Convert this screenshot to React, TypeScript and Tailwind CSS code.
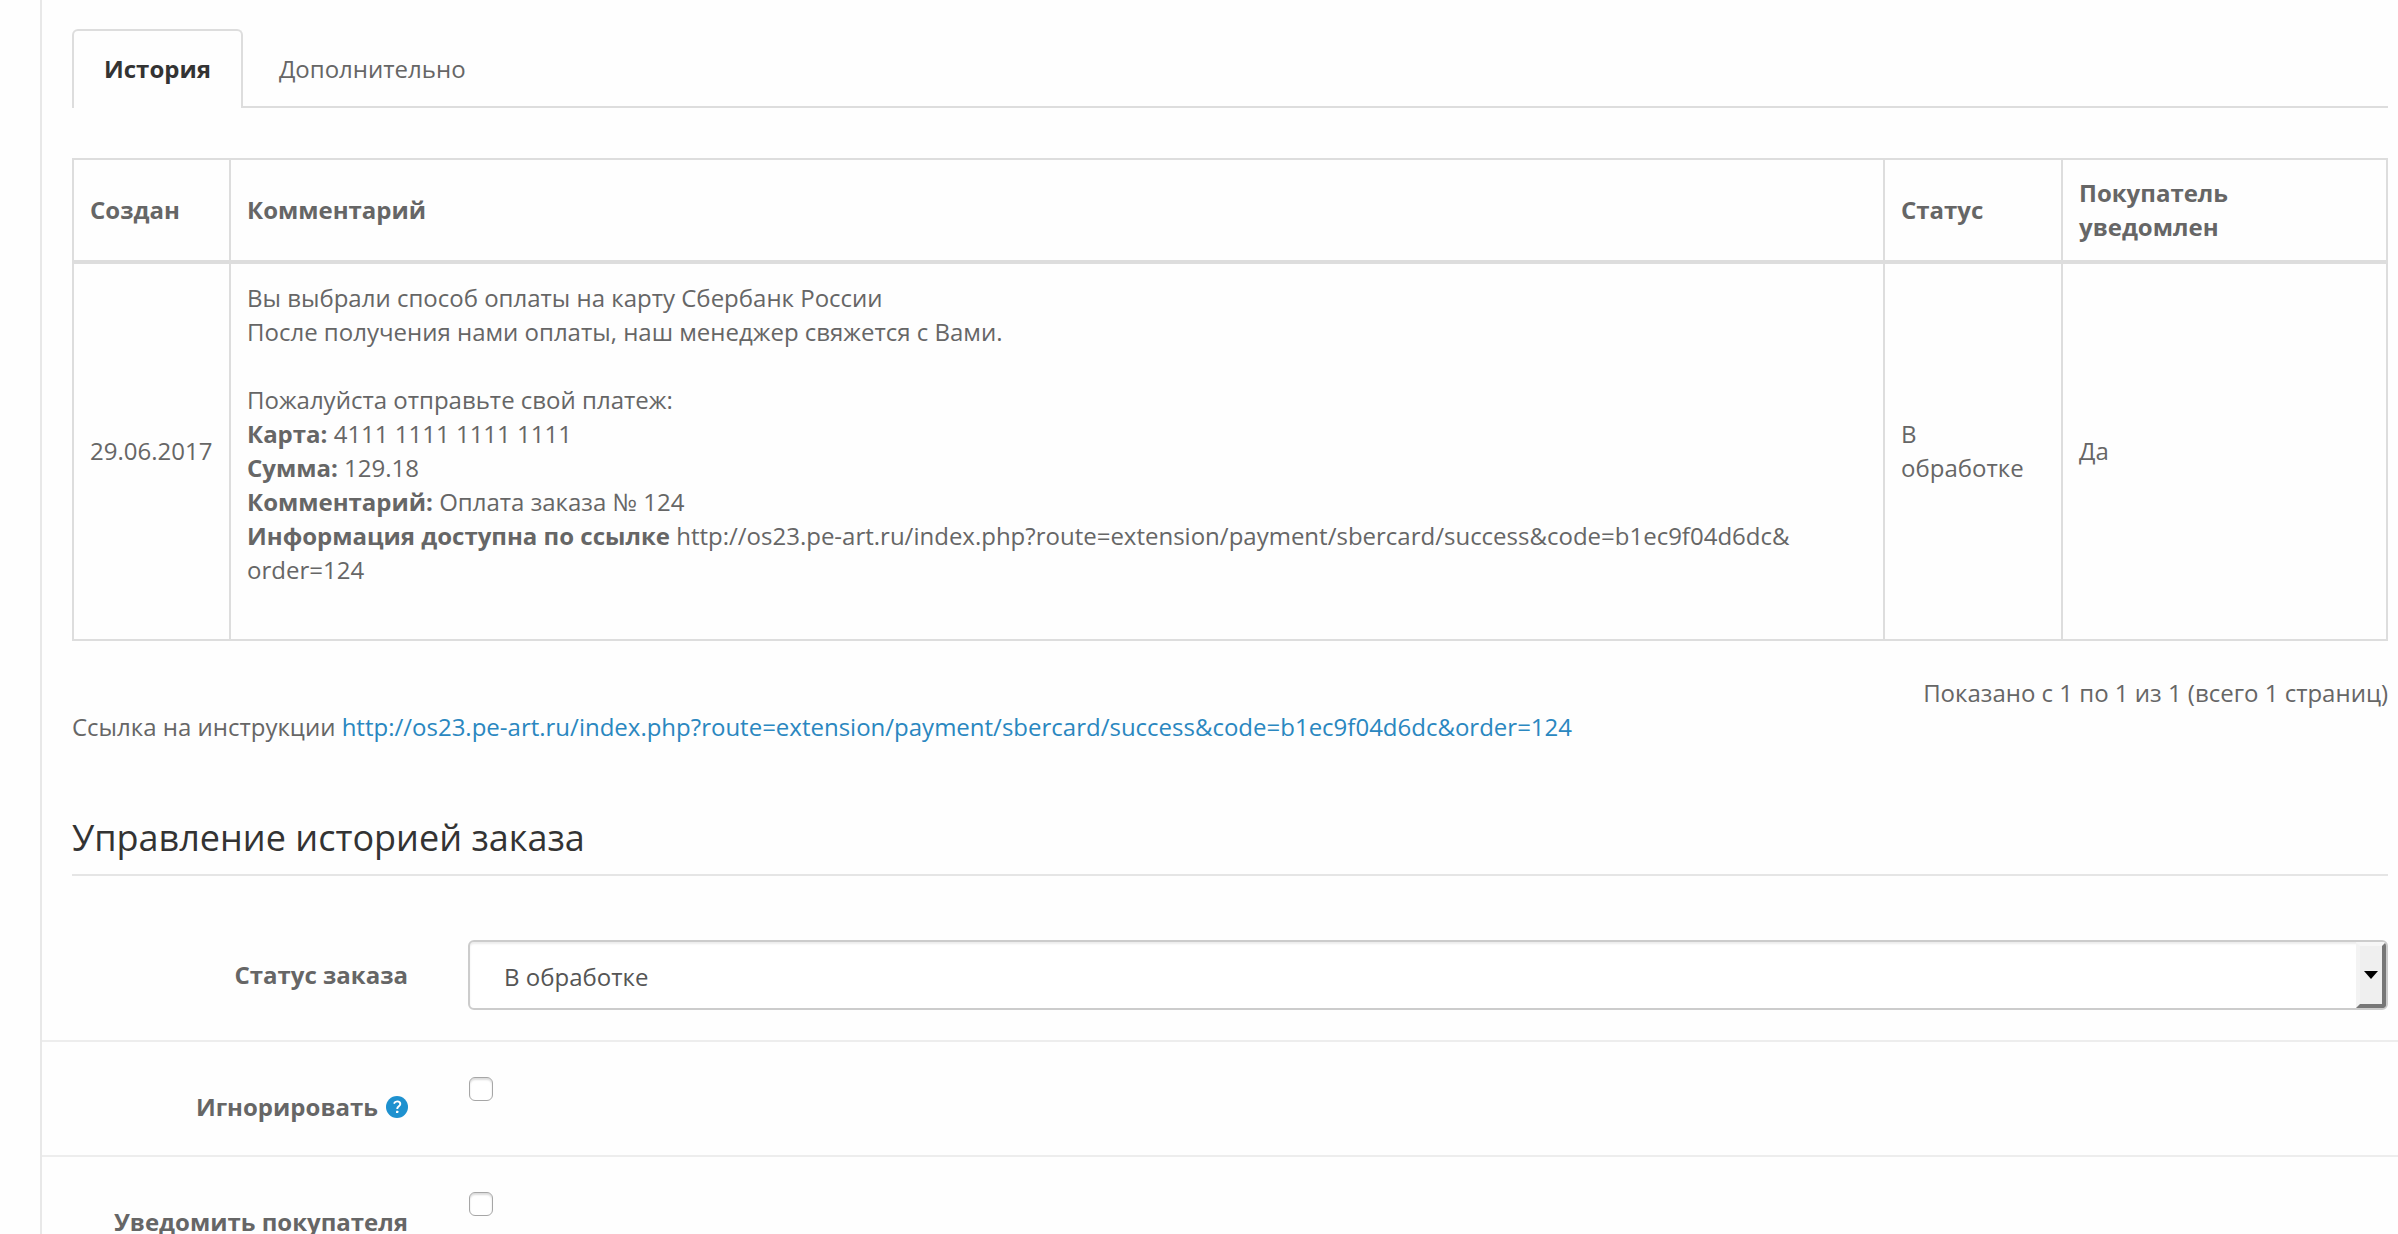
import { useState } from "react";

const INSTRUCTION_URL =
  "http://os23.pe-art.ru/index.php?route=extension/payment/sbercard/success&code=b1ec9f04d6dc&order=124";

const tabs = ["История", "Дополнительно"];

function HelpIcon() {
  return (
    <svg viewBox="0 0 22 22" className="w-[22px] h-[22px] shrink-0" aria-hidden="true">
      <circle cx="11" cy="11" r="11" fill="#1e91cf" />
      <path
        d="M7.9 7.6C8.6 6.1 9.7 5.4 11.2 5.4c1.8 0 3.1 1 3.1 2.6 0 2.3-3.1 2.3-3.1 4.9"
        fill="none"
        stroke="#ffffff"
        strokeWidth="1.9"
      />
      <rect x="10" y="14.8" width="2.3" height="2.3" rx="0.4" fill="#ffffff" />
    </svg>
  );
}

type CheckRowProps = {
  id: string;
  label: string;
  help?: boolean;
};

function CheckRow({ id, label, help }: CheckRowProps) {
  return (
    <div className="flex border-t-2 border-[#ededed] pt-[30px] pb-[31px]">
      <label
        htmlFor={id}
        className="w-[396px] shrink-0 pt-[18px] pr-[30px] flex items-center justify-end gap-2 font-bold"
      >
        {label}
        {help && <HelpIcon />}
      </label>
      <div className="pl-[31px] pt-[5px]">
        <input
          id={id}
          type="checkbox"
          className="block appearance-none w-6 h-6 rounded-md border border-[#a6a6a6] bg-white shadow-[inset_0_2px_2px_rgba(0,0,0,0.14)] checked:bg-[#1e91cf]"
        />
      </div>
    </div>
  );
}

export default function App() {
  const [activeTab, setActiveTab] = useState(0);
  const [status, setStatus] = useState("processing");

  return (
    <div className="min-h-screen bg-[#fefefe] pl-10 font-['Open_Sans','Noto_Sans',sans-serif] text-2xl leading-[34px] text-[#666666]">
      <main className="min-h-screen border-l-2 border-[#e8e8e8] pt-[29px]">
        <div className="pl-[30px] pr-[10px]">
          <div role="tablist" className="flex gap-1 border-b-2 border-[#dddddd]">
            {tabs.map((tab, i) => (
              <button
                key={tab}
                type="button"
                role="tab"
                aria-selected={i === activeTab}
                onClick={() => setActiveTab(i)}
                className={
                  i === activeTab
                    ? "-mb-[2px] rounded-t-md border-2 border-b-0 border-[#dddddd] bg-[#fefefe] px-[30px] pt-[21px] pb-[22px] font-bold text-[#333333]"
                    : "border-2 border-b-0 border-transparent px-[30px] pt-[21px] pb-5"
                }
              >
                {tab}
              </button>
            ))}
          </div>

          <table className="mt-[50px] w-full border-collapse text-left [&_td]:border-2 [&_td]:border-[#dddddd] [&_td]:px-4 [&_td]:pt-[17px] [&_td]:pb-[18px] [&_th]:border-2 [&_th]:border-b-4 [&_th]:border-[#dddddd] [&_th]:p-4">
            <thead>
              <tr>
                <th className="w-[157px]">Создан</th>
                <th>Комментарий</th>
                <th className="w-[178px]">Статус</th>
                <th className="w-[325px]">
                  Покупатель
                  <br />
                  уведомлен
                </th>
              </tr>
            </thead>
            <tbody>
              <tr>
                <td>29.06.2017</td>
                <td>
                  Вы выбрали способ оплаты на карту Сбербанк России
                  <br />
                  После получения нами оплаты, наш менеджер свяжется с Вами.
                  <br />
                  <br />
                  Пожалуйста отправьте свой платеж:
                  <br />
                  <b>Карта:</b> 4111 1111 1111 1111
                  <br />
                  <b>Сумма:</b> 129.18
                  <br />
                  <b>Комментарий:</b> Оплата заказа № 124
                  <br />
                  <b>Информация доступна по ссылке</b>{" "}
                  http://os23.pe-art.ru/index.php?route=extension/payment/sbercard/success&amp;code=b1ec9f04d6dc&amp;
                  <wbr />
                  order=124
                  <br />
                  <br />
                </td>
                <td>
                  В<br />
                  обработке
                </td>
                <td>Да</td>
              </tr>
            </tbody>
          </table>

          <p className="mt-[35px] text-right">Показано с 1 по 1 из 1 (всего 1 страниц)</p>
          <p>
            Ссылка на инструкции{" "}
            <a href={INSTRUCTION_URL} className="text-[#2a87c0]">
              {INSTRUCTION_URL}
            </a>
          </p>

          <h2 className="mt-[68px] border-b-2 border-[#e5e5e5] pb-[10px] text-4xl leading-[52px] text-[#333333]">
            Управление историей заказа
          </h2>
        </div>

        <form className="mt-[34px]">
          <div className="flex py-[30px] pr-[10px]">
            <label
              htmlFor="order-status"
              className="w-[396px] shrink-0 pt-[18px] pr-[30px] text-right font-bold"
            >
              Статус заказа
            </label>
            <div className="relative ml-[30px] grow">
              <select
                id="order-status"
                value={status}
                onChange={(e) => setStatus(e.target.value)}
                className="block w-full h-[70px] appearance-none rounded-md border-2 border-[#cccccc] bg-white px-[34px] pt-1 text-[#555555] shadow-[inset_0_2px_2px_rgba(0,0,0,0.08)]"
              >
                <option value="processing">В обработке</option>
                <option value="done">Сделка завершена</option>
              </select>
              <span className="pointer-events-none absolute top-[2px] right-[2px] bottom-[2px] flex w-[30px] items-center justify-center rounded-r-sm border-4 border-t-[#f6f6f6] border-r-[#777777] border-b-[#777777] border-l-[#f3f3f3] bg-[#efefef]">
                <svg viewBox="0 0 14 8" className="w-[14px] h-2 shrink-0" aria-hidden="true">
                  <path d="M0 0h14L7 8z" fill="#000000" />
                </svg>
              </span>
            </div>
          </div>

          <CheckRow id="override" label="Игнорировать" help />
          <CheckRow id="notify" label="Уведомить покупателя" />
        </form>
      </main>
    </div>
  );
}
